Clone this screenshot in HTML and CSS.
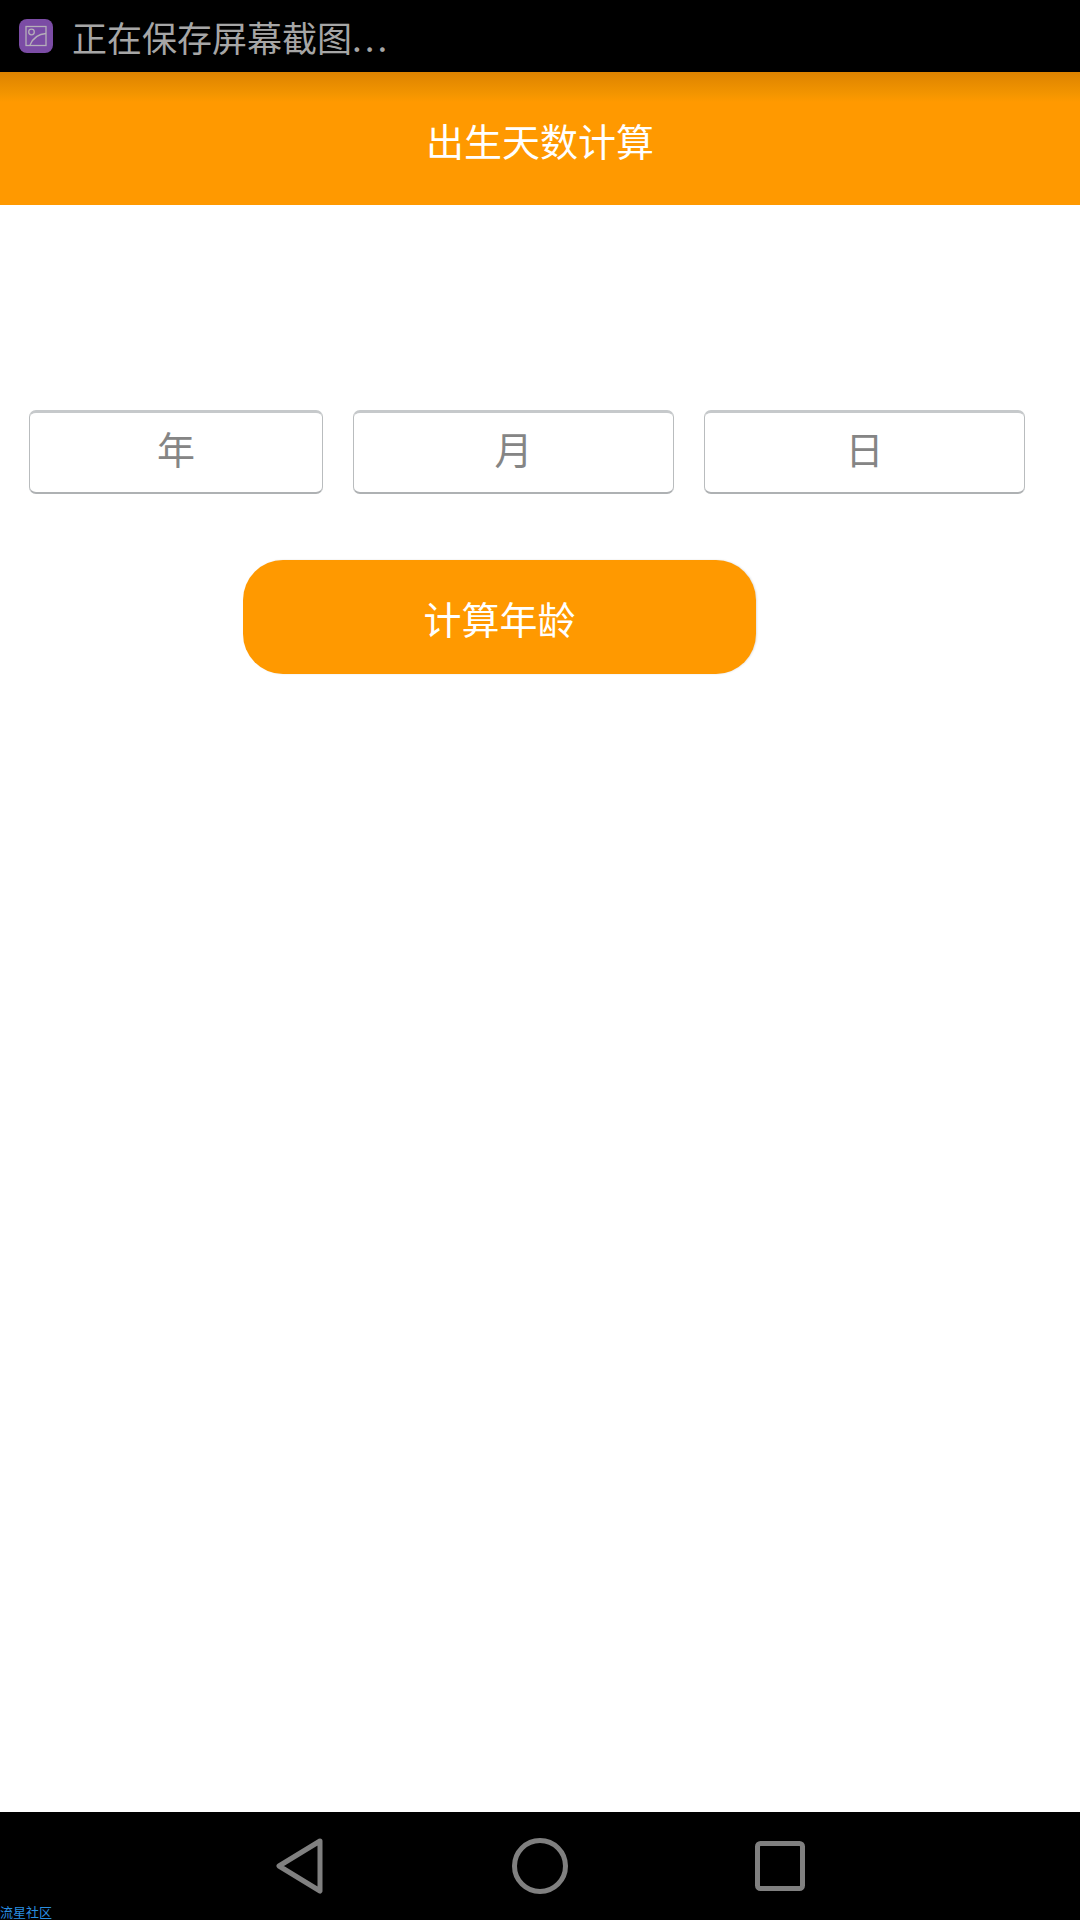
FILE: index.html
```html
<!DOCTYPE html>
<html lang="zh-CN">
<head>
    <meta charset="UTF-8">
    <meta name="viewport" content="width=device-width, initial-scale=1.0">
    <title>出生天数计算</title>
    <link rel="stylesheet" href="styles.css">
</head>
<body>

    <div class="screen">
        <div class="status-bar">
            <svg class="status-icon" viewBox="0 0 34 34">
                <rect width="34" height="34" rx="8" fill="#7b4ca5"/>
                <rect x="7" y="7.500" width="20" height="19" fill="none" stroke="#b5afb9" stroke-width="1.300"/>
                <circle cx="12.500" cy="13" r="2.800" fill="none" stroke="#b5afb9" stroke-width="1.300"/>
                <path d="M11 26 C14 19 19 15 27 14.500" fill="none" stroke="#b5afb9" stroke-width="1.300"/>
            </svg>
            <span class="status-text">正在保存屏幕截图<span class="status-dots">...</span></span>
        </div>

        <div class="toolbar">
            <h1 class="toolbar-title">出生天数计算</h1>
        </div>

        <div class="content">
            <form class="date-row">
                <input class="date-input" type="text" placeholder="年">
                <input class="date-input" type="text" placeholder="月">
                <input class="date-input" type="text" placeholder="日">
            </form>
            <button class="calc-button" type="button">计算年龄</button>
        </div>

        <div class="nav-bar">
            <svg class="nav-back" viewBox="0 0 48 56">
                <path d="M44 3 L3 28 L44 53 Z" fill="none" stroke="#808080" stroke-width="5" stroke-linejoin="round"/>
            </svg>
            <svg class="nav-home" viewBox="0 0 56 56">
                <circle cx="28" cy="28" r="25.500" fill="none" stroke="#808080" stroke-width="5"/>
            </svg>
            <svg class="nav-recent" viewBox="0 0 50 50">
                <rect x="2.500" y="2.500" width="45" height="45" rx="3" fill="none" stroke="#808080" stroke-width="5"/>
            </svg>
            <span class="watermark">流星社区</span>
        </div>
    </div>

</body>
</html>
```

FILE: styles.css
```css
* {
    box-sizing: border-box;
}
body {
    margin: 0;
    background-color: #fff;
    font-family: "Noto Sans CJK SC", "Liberation Sans", sans-serif;
}
.screen {
    display: flex;
    flex-direction: column;
    width: 1080px;
    height: 1920px;
    overflow: hidden;
}
.status-bar {
    display: flex;
    align-items: center;
    gap: 19px;
    height: 72px;
    padding: 0 0 0 19px;
    background-color: #000;
}
.status-icon {
    width: 34px;
    height: 34px;
}
.status-text {
    padding-top: 2px;
    color: #a6a6a6;
    font-size: 35px;
    line-height: 70px;
}
.status-dots {
    letter-spacing: 3px;
}
.toolbar {
    display: flex;
    align-items: center;
    justify-content: center;
    height: 133px;
    background: linear-gradient(#dd8300, #f39500 22px, #ff9900 30px);
}
.toolbar-title {
    margin: 0;
    padding-top: 2px;
    color: #fff;
    font-size: 38px;
    font-weight: 400;
    line-height: 1.2;
}
.content {
    flex: 1;
    padding: 205px 0 0 29px;
}
.date-row {
    display: grid;
    grid-template-columns: 294px 321px 321px;
    gap: 30px;
}
.date-input {
    height: 84px;
    padding: 0 0 11px;
    border-style: solid;
    border-width: 3px 1px 2px;
    border-color: #c6c9cb #b9bcbe #aeb1b3;
    border-radius: 7px;
    background-color: #fff;
    font-family: inherit;
    font-size: 38px;
    text-align: center;
}
.date-input::placeholder {
    color: #858585;
    opacity: 1;
}
.calc-button {
    display: block;
    width: 513px;
    height: 114px;
    margin: 66px 0 0 214px;
    padding: 0;
    border: none;
    border-radius: 40px;
    box-shadow: 1px 0 2px rgba(0, 0, 0, 0.12);
    background-color: #ff9900;
    color: #fff;
    font-family: inherit;
    font-size: 38px;
}
.nav-bar {
    position: relative;
    display: flex;
    align-items: center;
    justify-content: center;
    height: 108px;
    background-color: #000;
}
.nav-back {
    width: 48px;
    height: 56px;
    margin-right: 188px;
}
.nav-home {
    width: 56px;
    height: 56px;
    margin-right: 187px;
}
.nav-recent {
    width: 50px;
    height: 50px;
}
.watermark {
    position: absolute;
    left: 0;
    bottom: 0;
    color: #2a8fe0;
    font-size: 13px;
    line-height: 16px;
}
```
